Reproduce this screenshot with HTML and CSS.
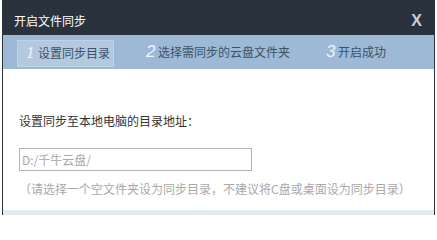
FILE: index.html
```html
<!DOCTYPE html>
<html lang="zh-CN">
<head>
<meta charset="utf-8">
<title>开启文件同步</title>
<link rel="stylesheet" href="styles.css">
</head>
<body>
<div class="window">
  <div class="titlebar">
    <span class="title">开启文件同步</span>
    <span class="close">X</span>
  </div>
  <div class="steps">
    <div class="step active"><span class="num num-one">1</span><span class="label">设置同步目录</span></div>
    <div class="step"><span class="num">2</span><span class="label">选择需同步的云盘文件夹</span></div>
    <div class="step"><span class="num">3</span><span class="label">开启成功</span></div>
  </div>
  <div class="content">
    <div class="field-label">设置同步至本地电脑的目录地址：</div>
    <div class="path-input">D:/千牛云盘/</div>
    <div class="hint">（请选择一个空文件夹设为同步目录，不建议将C盘或桌面设为同步目录）</div>
  </div>
  <div class="footer-band"></div>
</div>
</body>
</html>
```

FILE: styles.css
```css
html, body {
  margin: 0;
  padding: 0;
  background: #ffffff;
}

body {
  width: 437px;
  height: 215px;
  overflow: hidden;
  font-family: "Noto Sans CJK SC", "Liberation Sans", sans-serif;
}

.window {
  margin-left: 2px;
  width: 431px;
  height: 215px;
  border-left: 1px solid #2a323c;
  border-right: 1px solid #2a323c;
  display: flex;
  flex-direction: column;
  background: #ffffff;
}

.titlebar {
  height: 35px;
  flex: none;
  background: #29323d;
  display: flex;
  align-items: center;
  justify-content: space-between;
  padding: 6px 12px 0 11px;
  box-sizing: border-box;
}

.title {
  color: #ffffff;
  font-size: 12px;
  line-height: 14px;
}

.close {
  color: #c9ced4;
  font-family: "Liberation Sans", Arial, sans-serif;
  font-weight: bold;
  font-size: 16px;
  line-height: 16px;
}

.steps {
  height: 34px;
  flex: none;
  background: #9db9d5;
  display: flex;
  align-items: center;
  padding-left: 14px;
  gap: 23px;
  box-sizing: border-box;
}

.step {
  height: 27px;
  display: flex;
  align-items: center;
  padding: 0 3px 0 8px;
  box-sizing: border-box;
  border: 1px solid transparent;
}

.step.active {
  background: #b4c9de;
  border-color: #c0d3e5;
  margin-top: 2px;
}

.num {
  width: 12px;
  color: #eef4fb;
  font-family: "Liberation Sans", Arial, sans-serif;
  font-style: italic;
  font-size: 17px;
  line-height: 18px;
}

.num-one {
  font-family: "Liberation Serif", "Times New Roman", serif;
}

.label {
  color: #3b5269;
  font-size: 12px;
  line-height: 14px;
}

.content {
  flex: 1;
  padding: 45px 0 0 16px;
  box-sizing: border-box;
}

.field-label {
  color: #333333;
  font-size: 12px;
  line-height: 14px;
}

.path-input {
  margin-top: 20px;
  width: 233px;
  height: 23px;
  box-sizing: border-box;
  border: 1px solid #b3b3b3;
  padding-left: 2px;
  color: #a8a8a8;
  font-size: 12px;
  line-height: 21px;
}

.hint {
  margin-top: 11px;
  color: #a9a9a9;
  font-size: 12px;
  line-height: 14px;
  white-space: nowrap;
}

.footer-band {
  height: 5px;
  flex: none;
  background: #e3eaf1;
}
```
